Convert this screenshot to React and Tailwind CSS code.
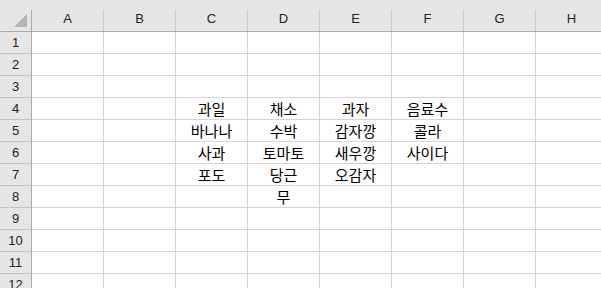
import React from 'react';

const cols = ['A', 'B', 'C', 'D', 'E', 'F', 'G', 'H'];

// 셀 데이터: 행 번호 -> 열 -> 값
const data = {
  4: { C: '과일', D: '채소', E: '과자', F: '음료수' },
  5: { C: '바나나', D: '수박', E: '감자깡', F: '콜라' },
  6: { C: '사과', D: '토마토', E: '새우깡', F: '사이다' },
  7: { C: '포도', D: '당근', E: '오감자' },
  8: { D: '무' },
};

const headFont = { fontFamily: '"Liberation Sans", Arial, sans-serif' };
const cellFont = { fontFamily: '"Noto Sans CJK KR", "Noto Sans", sans-serif' };

function Corner() {
  return (
    <div className="w-[32px] h-full flex shrink-0">
      <div className="flex-1 flex items-start">
        <svg width="31" height="31" viewBox="0 0 31 31">
          <polygon points="27,14 27,27 14,27" fill="#b5b5b5" />
        </svg>
      </div>
      <div className="w-px h-[21px] self-end bg-[#ababab]" />
    </div>
  );
}

function ColHeader({ label }) {
  return (
    <div className="w-[72px] h-full flex shrink-0">
      <div className="flex-1 flex justify-center pt-[12px] text-[13px] leading-[14px] text-[#222]">{label}</div>
      <div className="w-px h-[21px] self-end bg-[#c8c8c8]" />
    </div>
  );
}

export default function App() {
  const rows = Array.from({ length: 12 }, (_, i) => i + 1);

  return (
    <div className="w-[601px] h-[288px] overflow-hidden bg-white">
      <div className="w-[608px]">
        {/* 열 머리글 */}
        <div className="flex h-[32px] bg-[#e6e6e6] border-b border-[#ababab]" style={headFont}>
          <Corner />
          {cols.map((c) => (
            <ColHeader key={c} label={c} />
          ))}
        </div>

        {/* 행 */}
        {rows.map((r) => (
          <div key={r} className="flex h-[22px]">
            <div
              className="w-[32px] shrink-0 bg-[#e6e6e6] border-r border-b border-r-[#ababab] border-b-[#c4c4c4] flex items-center justify-center text-[13px] text-[#222]"
              style={headFont}
            >
              {r}
            </div>
            {cols.map((c) => (
              <div
                key={c}
                className="w-[72px] shrink-0 border-r border-b border-[#d4d4d4] flex items-center justify-center text-[15px] leading-none text-black"
                style={cellFont}
              >
                {data[r] && data[r][c]}
              </div>
            ))}
          </div>
        ))}
      </div>
    </div>
  );
}
